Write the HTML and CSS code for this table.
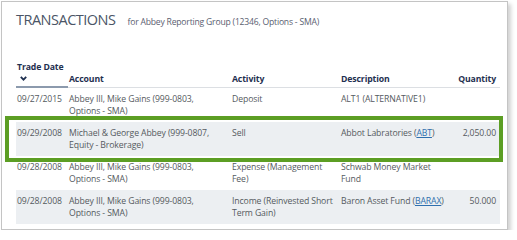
FILE: index.html
```html
<!DOCTYPE html>
<html>
<head>
<meta charset="utf-8">
<link rel="stylesheet" href="styles.css">
</head>
<body>
<div class="card">
  <div class="title-row">
    <h1 class="title">TRANSACTIONS</h1>
    <span class="subtitle">for Abbey Reporting Group (12346, Options - SMA)</span>
  </div>
  <div class="table">
    <div class="row head">
      <div class="cell sorted">Trade Date<br><svg class="chev" width="7" height="5" viewBox="0 0 7 5"><path d="M0.8 0.8 L3.5 3.6 L6.2 0.8" fill="none" stroke="#1f3050" stroke-width="1.8"/></svg></div>
      <div class="cell">Account</div>
      <div class="cell">Activity</div>
      <div class="cell">Description</div>
      <div class="cell num">Quantity</div>
    </div>
    <div class="row">
      <div class="cell">09/27/2015</div>
      <div class="cell">Abbey III, Mike Gains (999-0803,<br>Options - SMA)</div>
      <div class="cell">Deposit</div>
      <div class="cell">ALT1 (ALTERNATIVE1)</div>
      <div class="cell num"></div>
    </div>
    <div class="row alt highlight">
      <div class="cell">09/29/2008</div>
      <div class="cell">Michael &amp; George Abbey (999-0807,<br>Equity - Brokerage)</div>
      <div class="cell">Sell</div>
      <div class="cell">Abbot Labratories (<a href="#">ABT</a>)</div>
      <div class="cell num">2,050.00</div>
    </div>
    <div class="row">
      <div class="cell">09/28/2008</div>
      <div class="cell">Abbey III, Mike Gains (999-0803,<br>Options - SMA)</div>
      <div class="cell">Expense (Management<br>Fee)</div>
      <div class="cell">Schwab Money Market<br>Fund</div>
      <div class="cell num"></div>
    </div>
    <div class="row alt">
      <div class="cell">09/28/2008</div>
      <div class="cell">Abbey III, Mike Gains (999-0803,<br>Options - SMA)</div>
      <div class="cell">Income (Reinvested Short<br>Term Gain)</div>
      <div class="cell">Baron Asset Fund (<a href="#">BARAX</a>)</div>
      <div class="cell num">50.000</div>
    </div>
  </div>
</div>
</body>
</html>
```
FILE: styles.css
```css
html, body {
  margin: 0;
  padding: 0;
  background: #ffffff;
}
body {
  font-family: "Open Sans", "Noto Sans", sans-serif;
  color: #555a60;
}
.card {
  position: relative;
  box-sizing: border-box;
  margin: 1px 0 0 1px;
  width: 507px;
  height: 229px;
  border: 1px solid #c4c4c4;
  box-shadow: 3px 3px 4px rgba(0, 0, 0, 0.18);
  padding: 0 6px 0 14px;
  background: #fff;
}
.title-row {
  display: flex;
  align-items: baseline;
  gap: 12px;
  padding-top: 8px;
  height: 53px;
  box-sizing: border-box;
}
.title {
  margin: 0;
  font-size: 14.5px;
  font-weight: 400;
  color: #4b5566;
  letter-spacing: -0.5px;
}
.subtitle {
  font-size: 8.6px;
  letter-spacing: -0.2px;
  color: #5a6070;
}
.table {
  width: 484px;
  font-size: 8.7px;
  letter-spacing: -0.12px;
  line-height: 12px;
}
.row {
  display: grid;
  grid-template-columns: 52px 163px 109px 100px minmax(0, 1fr);
  padding: 5px 0 5px;
  height: 24px;
}
.row.head {
  padding: 4px 0 0;
  height: 28px;
  align-items: end;
  border-bottom: 1px solid #dcdfe3;
  color: #1f3050;
  font-weight: 700;
}
.row.head .cell {
  padding-bottom: 2px;
}
.row.head .sorted {
  border-bottom: 2px solid #8c9aad;
  margin-bottom: -1px;
  padding-bottom: 1px;
}
.chev {
  display: inline-block;
  margin: 3px 0 0 3px;
  vertical-align: top;
}
.cell {
  padding-left: 1px;
  white-space: nowrap;
}
.cell.num {
  text-align: right;
  padding-right: 4px;
}
.row.alt {
  background: #eceff2;
}
.highlight {
  position: relative;
}
.highlight::after {
  content: "";
  position: absolute;
  left: -11px;
  right: -3px;
  top: -6px;
  bottom: -6px;
  border: 4px solid #5c9e24;
  pointer-events: none;
}
a {
  color: #2f6fae;
  text-decoration: underline;
}
```
